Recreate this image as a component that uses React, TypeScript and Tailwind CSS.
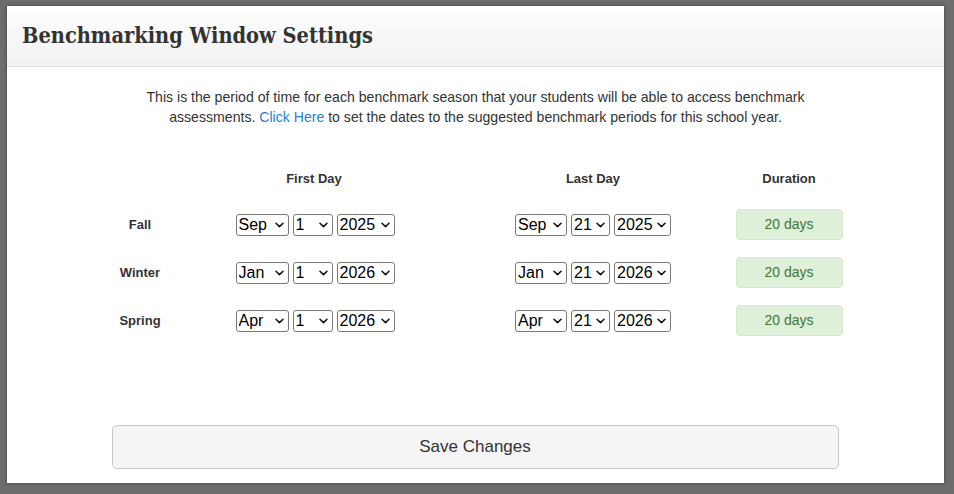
import React from "react";

const seasons = [
  { name: "Fall", start: ["Sep", "1", "2025"], end: ["Sep", "21", "2025"], days: 20 },
  { name: "Winter", start: ["Jan", "1", "2026"], end: ["Jan", "21", "2026"], days: 20 },
  { name: "Spring", start: ["Apr", "1", "2026"], end: ["Apr", "21", "2026"], days: 20 },
];

const Chevron = () => (
  <svg
    className="pointer-events-none absolute right-[5px] top-1/2 -translate-y-1/2"
    width="9"
    height="6"
    viewBox="0 0 9 6"
    fill="none"
  >
    <path d="M1 1.2L4.5 4.6L8 1.2" stroke="#111" strokeWidth="1.5" strokeLinecap="round" strokeLinejoin="round" />
  </svg>
);

const Pick: React.FC<{ value: string; w: string }> = ({ value, w }) => (
  <div className={`relative h-[22px] ${w}`}>
    <select
      defaultValue={value}
      className="h-full w-full appearance-none rounded-[3px] border border-[#7a7a7a] bg-white pl-[2px] text-[16px] font-normal leading-none text-black outline-none"
    >
      <option>{value}</option>
    </select>
    <Chevron />
  </div>
);

export default function App() {
  return (
    <div
      className="h-[494px] w-[954px] overflow-hidden bg-[#6d6d6d] pl-[7px] pt-[6px]"
      style={{ fontFamily: '"Liberation Sans", Arial, sans-serif' }}
    >
      <div className="flex h-[477px] w-[937px] flex-col bg-white shadow-[0_0_4px_rgba(0,0,0,0.4)]">
        <div className="flex h-[61px] items-center border-b border-[#dcdcdc] bg-gradient-to-b from-white to-[#f1f1f1] pl-[15px]">
          <h1
            className="text-[21.6px] font-bold text-[#333]"
            style={{ fontFamily: '"DejaVu Serif Condensed", "DejaVu Serif", serif' }}
          >
            Benchmarking Window Settings
          </h1>
        </div>

        <p className="mt-[20px] text-center text-[14.1px] leading-[20px] text-[#333]">
          This is the period of time for each benchmark season that your students will be able to access benchmark
          <br />
          assessments. <span className="text-[#2a7fd0]">Click Here</span> to set the dates to the suggested benchmark
          periods for this school year.
        </p>

        <div className="ml-[73px] mt-[42px] flex flex-col text-[13px] font-bold text-[#333]">
          <div className="flex h-[20px] items-center">
            <div className="w-[120px]" />
            <div className="w-[228px] text-center">First Day</div>
            <div className="ml-[50px] w-[230px] text-center">Last Day</div>
            <div className="ml-[26px] w-[110px] text-center">Duration</div>
          </div>
          <div className="mt-[20px] flex flex-col gap-[17px]">
            {seasons.map((s) => (
              <div key={s.name} className="flex h-[31px] items-center">
                <div className="w-[120px] text-center">{s.name}</div>
                <div className="flex w-[228px] justify-center gap-[4px] pl-[2px]">
                  <Pick value={s.start[0]} w="w-[53px]" />
                  <Pick value={s.start[1]} w="w-[40px]" />
                  <Pick value={s.start[2]} w="w-[58px]" />
                </div>
                <div className="ml-[50px] flex w-[230px] justify-center gap-[4px]">
                  <Pick value={s.end[0]} w="w-[52px]" />
                  <Pick value={s.end[1]} w="w-[39px]" />
                  <Pick value={s.end[2]} w="w-[57px]" />
                </div>
                <div className="ml-[26px] flex w-[110px] justify-center">
                  <div className="flex h-[31px] w-[107px] items-center justify-center rounded-[4px] border border-[#d6e9c6] bg-[#dff0d8] text-[14px] font-normal text-[#3c763d]">
                    {s.days} days
                  </div>
                </div>
              </div>
            ))}
          </div>
        </div>

        <div className="mt-auto mb-[14px] flex justify-center pr-[1px]">
          <button className="h-[44px] w-[727px] rounded-[5px] border border-[#c8c8c8] bg-[#f5f5f5] text-[17px] text-[#333]">
            Save Changes
          </button>
        </div>
      </div>
    </div>
  );
}
